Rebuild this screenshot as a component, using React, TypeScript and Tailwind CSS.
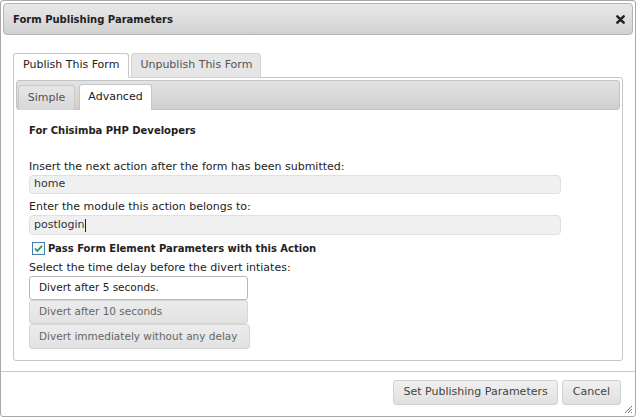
import React from "react";

const font = { fontFamily: '"DejaVu Sans", Verdana, sans-serif' };

export default function App() {
  return (
    <div className="w-[638px] h-[417px] bg-white" style={font}>
      <div className="w-[636px] h-[417px] border border-[#a8a8a8] rounded-[3px] p-[2px] flex flex-col text-[11px] text-[#222]">
        {/* Title bar */}
        <div className="h-[32px] shrink-0 rounded-[4px] border border-[#b4b4b4] bg-gradient-to-b from-[#e9e9e9] to-[#d1d1d1] flex items-center justify-between pl-[9px] pr-[5px]">
          <span className="font-bold text-[10px] text-[#222]">Form Publishing Parameters</span>
          <svg width="9" height="9" viewBox="0 0 10 10" className="mr-[2px]">
            <path d="M1.5 1.5 L8.5 8.5 M8.5 1.5 L1.5 8.5" stroke="#222" strokeWidth="2.8" strokeLinecap="round" />
          </svg>
        </div>

        {/* Content */}
        <div className="flex-1 px-[10px] pt-[18px]">
          {/* Outer tabs */}
          <div className="flex items-end h-[25px] gap-[2px] relative z-10">
            <div className="h-[25px] px-[9px] flex items-center border border-[#c6c6c6] border-b-white rounded-t-[3px] bg-white text-[#222]">
              Publish This Form
            </div>
            <div className="h-[25px] px-[8px] flex items-center border border-[#d3d3d3] rounded-t-[3px] bg-[#e6e6e6] text-[#555]">
              Unpublish This Form
            </div>
          </div>
          {/* Outer panel */}
          <div className="h-[284px] -mt-px border border-[#c6c6c6] rounded-b-[3px] rounded-tr-[3px] p-[2px] flex flex-col">
            {/* Inner tab header */}
            <div className="h-[30px] shrink-0 rounded-[3px] border border-[#c4c4c4] bg-gradient-to-b from-[#e3e3e3] to-[#cfcfcf] flex items-end pl-[1px] gap-[4px]">
              <div className="h-[25px] w-[57px] flex items-center justify-center border border-[#c8c8c8] border-b-0 rounded-t-[3px] bg-gradient-to-b from-[#e6e6e6] to-[#d8d8d8] text-[#555] -mb-px">
                Simple
              </div>
              <div className="h-[26px] w-[73px] flex items-center justify-center border border-[#c6c6c6] border-b-0 rounded-t-[3px] bg-white text-[#222] -mb-px relative">
                Advanced
              </div>
            </div>

            <div className="flex flex-col pl-[13px] pt-[12px]">
              <div className="h-[16px] flex items-center font-bold text-[10px]">For Chisimba PHP Developers</div>
              <div className="h-[14px] mt-[22px] flex items-center">
                Insert the next action after the form has been submitted:
              </div>
              <div className="h-[19px] mt-[1px] w-[532px] rounded-[4px] border border-[#e0e0e0] bg-[#f0f0f0] flex items-center px-[4px] text-[#333]">
                home
              </div>
              <div className="h-[14px] mt-[6px] flex items-center">Enter the module this action belongs to:</div>
              <div className="h-[20px] mt-[1px] w-[532px] rounded-[4px] border border-[#e0e0e0] bg-[#f0f0f0] flex items-center px-[4px] text-[#333]">
                postlogin<span className="inline-block w-px h-[13px] bg-[#222]" />
              </div>
              <div className="h-[14px] mt-[6px] flex items-center gap-[3px] pl-[3px]">
                <svg width="13" height="13" viewBox="0 0 13 13">
                  <rect x="0.5" y="0.5" width="12" height="12" fill="#f4f8fc" stroke="#4a7bb0" />
                  <path d="M3 6.5 L5.3 9 L10 3.8" stroke="#2e9a2e" strokeWidth="1.8" fill="none" />
                </svg>
                <span className="font-bold text-[10px]">Pass Form Element Parameters with this Action</span>
              </div>
              <div className="h-[14px] mt-[6px] flex items-center">Select the time delay before the divert intiates:</div>
              <div className="mt-[1px] flex flex-col items-start text-[10.5px]">
                <div className="h-[24px] w-[219px] rounded-[3px] border border-[#b8b8b8] bg-white flex items-center pl-[9px] text-[#222]">
                  Divert after 5 seconds.
                </div>
                <div className="h-[24px] w-[219px] rounded-[3px] border border-[#d6d6d6] bg-gradient-to-b from-[#ececec] to-[#e2e2e2] flex items-center pl-[9px] text-[#666]">
                  Divert after 10 seconds
                </div>
                <div className="h-[25px] w-[221px] rounded-[3px] border border-[#d6d6d6] bg-gradient-to-b from-[#ececec] to-[#e2e2e2] flex items-center pl-[9px] text-[#666]">
                  Divert immediately without any delay
                </div>
              </div>
            </div>
          </div>
        </div>

        {/* Footer */}
        <div className="h-[43px] shrink-0 border-t border-[#c8c8c8] -mx-[2px] flex items-start justify-end gap-[4px] pt-[8px] pr-[14px] relative">
          <div className="h-[25px] px-[9px] rounded-[3px] border border-[#d0d0d0] bg-gradient-to-b from-[#f0f0f0] to-[#e0e0e0] flex items-center text-[#444]">
            Set Publishing Parameters
          </div>
          <div className="h-[25px] px-[10px] rounded-[3px] border border-[#d0d0d0] bg-gradient-to-b from-[#f0f0f0] to-[#e0e0e0] flex items-center text-[#444]">
            Cancel
          </div>
          <svg width="10" height="10" viewBox="0 0 10 10" className="absolute right-[2px] bottom-[0px]">
            <path d="M9 2 L2 9 M9 5 L5 9 M9 8 L8 9" stroke="#777" strokeWidth="1" />
          </svg>
        </div>
      </div>
    </div>
  );
}
